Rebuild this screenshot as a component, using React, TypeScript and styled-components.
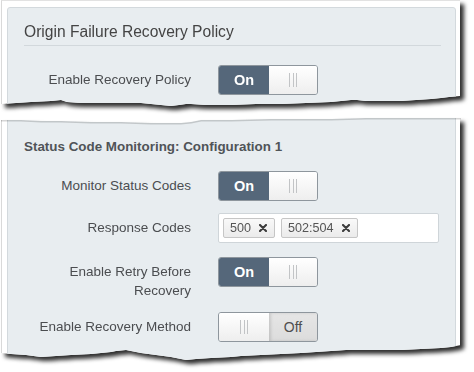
import React from "react";
import styled, { createGlobalStyle } from "styled-components";

const Global = createGlobalStyle`
  html, body { margin: 0; padding: 0; background: #fff; }
  body { font-family: "Liberation Sans", Arial, sans-serif; }
`;

type Pt = [number, number];
const poly = (pts: Pt[]) => `polygon(${pts.map(([x, y]) => `${x}px ${y}px`).join(", ")})`;

const sheet1Bottom: Pt[] = [
  [460, 96], [448, 97], [440, 98], [430, 99], [415, 100], [400, 101], [380, 101], [365, 101], [356, 100], [350, 100],
  [340, 101], [330, 102], [305, 103], [280, 104], [255, 104], [230, 105], [205, 105], [190, 104], [185, 104], [178, 105],
  [170, 106], [160, 105], [140, 103], [120, 103], [100, 103], [80, 103], [66, 102], [60, 100], [50, 101], [30, 102], [15, 103], [0, 104],
];
const sheet1Clip = poly([[0, 0], [460, 0], ...sheet1Bottom]);

const sheet2Top: Pt[] = [
  [0, 6], [20, 6], [40, 7], [60, 7], [90, 8], [120, 8], [150, 9], [180, 9], [190, 8], [200, 6], [230, 6], [270, 5],
  [300, 5], [330, 5], [365, 4], [400, 4], [430, 4], [460, 4],
];
const sheet2Bottom: Pt[] = [
  [460, 231], [450, 233], [440, 234], [420, 235], [400, 236], [370, 236], [345, 236], [330, 237], [315, 238], [300, 239],
  [280, 240], [260, 241], [240, 242], [230, 243], [210, 244], [195, 245], [185, 246], [175, 244], [170, 243], [155, 241],
  [140, 239], [125, 236], [115, 237], [110, 238], [90, 240], [70, 241], [55, 242], [40, 243], [25, 241], [10, 240], [0, 239],
];
const sheet2Clip = poly([...sheet2Top, ...sheet2Bottom]);
const sheet2TopPath = sheet2Top.map(([x, y], i) => `${i ? "L" : "M"}${x} ${y}`).join(" ");

const Page = styled.div`
  width: 474px;
  height: 372px;
  overflow: hidden;
  background: #fff;
  display: flex;
  flex-direction: column;
  gap: 6px;
`;

const ShadowWrap = styled.div`
  width: 460px;
  filter: drop-shadow(4px 4px 2px rgba(0, 0, 0, 0.82));
`;

const Sheet = styled.div<{ $h: number; $top: number }>`
  position: relative;
  box-sizing: border-box;
  height: ${(p) => p.$h}px;
  background: #fff;
  border-left: 1px solid #d9d9d9;
  border-top: 1px solid #e2e2e2;
  margin-left: 1px;
  padding: ${(p) => p.$top}px 4px 0 5px;
`;

const Panel = styled.div<{ $open?: boolean }>`
  box-sizing: border-box;
  height: 100%;
  background: #e8edf0;
  border: 1px solid #d3d9dd;
  border-top: ${(p) => (p.$open ? "none" : "1px solid #d3d9dd")};
  border-radius: 3px;
  padding: ${(p) => (p.$open ? "23px" : "14px")} 14px 0 16px;
`;

const Heading = styled.div`
  font-size: 15.6px;
  line-height: 20px;
  color: #444;
  padding-bottom: 3px;
  border-bottom: 1px solid #d2d8dc;
  margin-bottom: 19px;
`;

const SubHeading = styled.div`
  font-size: 13.4px;
  font-weight: bold;
  line-height: 18px;
  color: #505458;
  margin-bottom: 15px;
`;

const Rows = styled.div`
  display: flex;
  flex-direction: column;
  gap: 12px;
`;

const Row = styled.div<{ $after?: number }>`
  display: grid;
  grid-template-columns: 167px auto;
  column-gap: 27px;
  align-items: start;
  margin-bottom: ${(p) => p.$after ?? 0}px;
`;

const Label = styled.div`
  text-align: right;
  font-size: 13.5px;
  line-height: 19px;
  color: #4b4d50;
  padding-top: 5px;
`;

const Toggle = styled.div`
  display: flex;
  width: 100px;
  height: 30px;
  box-sizing: border-box;
  border: 1px solid #8e969d;
  border-radius: 3px;
  overflow: hidden;
`;

const OnSeg = styled.div`
  flex: 0 0 50px;
  display: flex;
  align-items: center;
  justify-content: center;
  background: #55677a;
  color: #fff;
  font-weight: bold;
  font-size: 14.5px;
`;

const OffSeg = styled.div`
  flex: 1;
  display: flex;
  align-items: center;
  justify-content: center;
  background: linear-gradient(#e6e6e6, #dcdcdc);
  box-shadow: inset 2px 0 3px rgba(0, 0, 0, 0.12);
  color: #4f4f4f;
  font-size: 14px;
`;

const Handle = styled.div<{ $w: number }>`
  flex: 0 0 ${(p) => p.$w}px;
  display: flex;
  align-items: center;
  justify-content: center;
  gap: 2.3px;
  background: linear-gradient(#ffffff, #eeeeee);
`;

const GripLine = styled.span`
  width: 1px;
  height: 14px;
  background: #c2c4c6;
`;

const TagInput = styled.div`
  box-sizing: border-box;
  width: 221px;
  height: 30px;
  display: flex;
  align-items: center;
  gap: 6px;
  padding: 0 4px;
  background: #fff;
  border: 1px solid #cfd5d9;
  border-radius: 2px;
`;

const Tag = styled.div`
  box-sizing: border-box;
  height: 20px;
  display: flex;
  align-items: center;
  gap: 8px;
  padding: 0 7px 0 6px;
  background: linear-gradient(#f9f9f9, #ebebeb);
  border: 1px solid #c6c6c6;
  border-radius: 2px;
  font-size: 12.6px;
  color: #555;
`;

const EdgeLine = styled.svg`
  position: absolute;
  left: -1px;
  top: -1px;
  width: 460px;
  height: 14px;
  pointer-events: none;
`;

const Grip = () => (
  <>
    <GripLine />
    <GripLine />
    <GripLine />
  </>
);

const Switch = ({ on }: { on: boolean }) =>
  on ? (
    <Toggle>
      <OnSeg>On</OnSeg>
      <Handle $w={48}>
        <Grip />
      </Handle>
    </Toggle>
  ) : (
    <Toggle>
      <Handle $w={50}>
        <Grip />
      </Handle>
      <OffSeg>Off</OffSeg>
    </Toggle>
  );

const XIcon = () => (
  <svg width="8" height="8" viewBox="0 0 8 8">
    <path d="M1 1 L7 7 M7 1 L1 7" stroke="#3c3c3c" strokeWidth="2.1" strokeLinecap="round" />
  </svg>
);

export default function App() {
  return (
    <>
      <Global />
      <Page>
        <ShadowWrap>
          <Sheet $h={108} $top={6} style={{ clipPath: sheet1Clip }}>
            <Panel>
              <Heading>Origin Failure Recovery Policy</Heading>
              <Row>
                <Label>Enable Recovery Policy</Label>
                <Switch on />
              </Row>
            </Panel>
          </Sheet>
        </ShadowWrap>
        <ShadowWrap>
          <Sheet $h={248} $top={0} style={{ clipPath: sheet2Clip }}>
            <Panel $open>
              <SubHeading>Status Code Monitoring: Configuration 1</SubHeading>
              <Rows>
                <Row>
                  <Label>Monitor Status Codes</Label>
                  <Switch on />
                </Row>
                <Row $after={2}>
                  <Label>Response Codes</Label>
                  <TagInput>
                    <Tag>
                      500
                      <XIcon />
                    </Tag>
                    <Tag>
                      502:504
                      <XIcon />
                    </Tag>
                  </TagInput>
                </Row>
                <Row>
                  <Label>Enable Retry Before Recovery</Label>
                  <Switch on />
                </Row>
                <Row>
                  <Label>Enable Recovery Method</Label>
                  <Switch on={false} />
                </Row>
              </Rows>
            </Panel>
            <EdgeLine viewBox="0 0 460 14">
              <path d={sheet2TopPath} fill="none" stroke="rgba(0,0,0,0.16)" strokeWidth="3" />
            </EdgeLine>
          </Sheet>
        </ShadowWrap>
      </Page>
    </>
  );
}
